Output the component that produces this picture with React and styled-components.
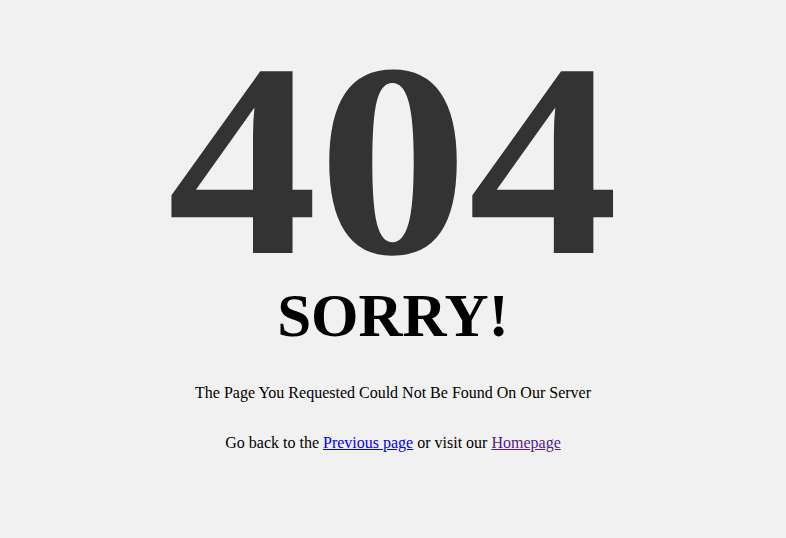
import React from "react";
import styled, { createGlobalStyle } from "styled-components";

const Global = createGlobalStyle`
  html, body { margin: 0; padding: 0; background: #f1f1f1; }
  body { font-family: "Liberation Serif", "Times New Roman", serif; color: #000; }
`;

const Page = styled.main`
  display: flex;
  flex-direction: column;
  align-items: center;
  text-align: center;
`;

const Code = styled.h1`
  margin: 40px 0 0;
  font-size: 276px;
  line-height: 240px;
  font-weight: 700;
  color: #333333;
  transform: scaleX(1.09);
`;

const Title = styled.h2`
  margin: 5px 0 0;
  font-size: 61px;
  line-height: 1;
  font-weight: 700;
`;

const Text = styled.p`
  margin: 0;
  font-size: 16px;
  line-height: 18px;
  margin-top: ${(p) => p.$top}px;
`;

const Link = styled.a`
  color: ${(p) => (p.$visited ? "#551a8b" : "#0000ee")};
  text-decoration: underline;
`;

export default function App() {
  return (
    <>
      <Global />
      <Page>
        <Code>404</Code>
        <Title>SORRY!</Title>
        <Text $top={38}>The Page You Requested Could Not Be Found On Our Server</Text>
        <Text $top={32}>
          Go back to the <Link href="#">Previous page</Link> or visit our{" "}
          <Link href="#" $visited>Homepage</Link>
        </Text>
      </Page>
    </>
  );
}
